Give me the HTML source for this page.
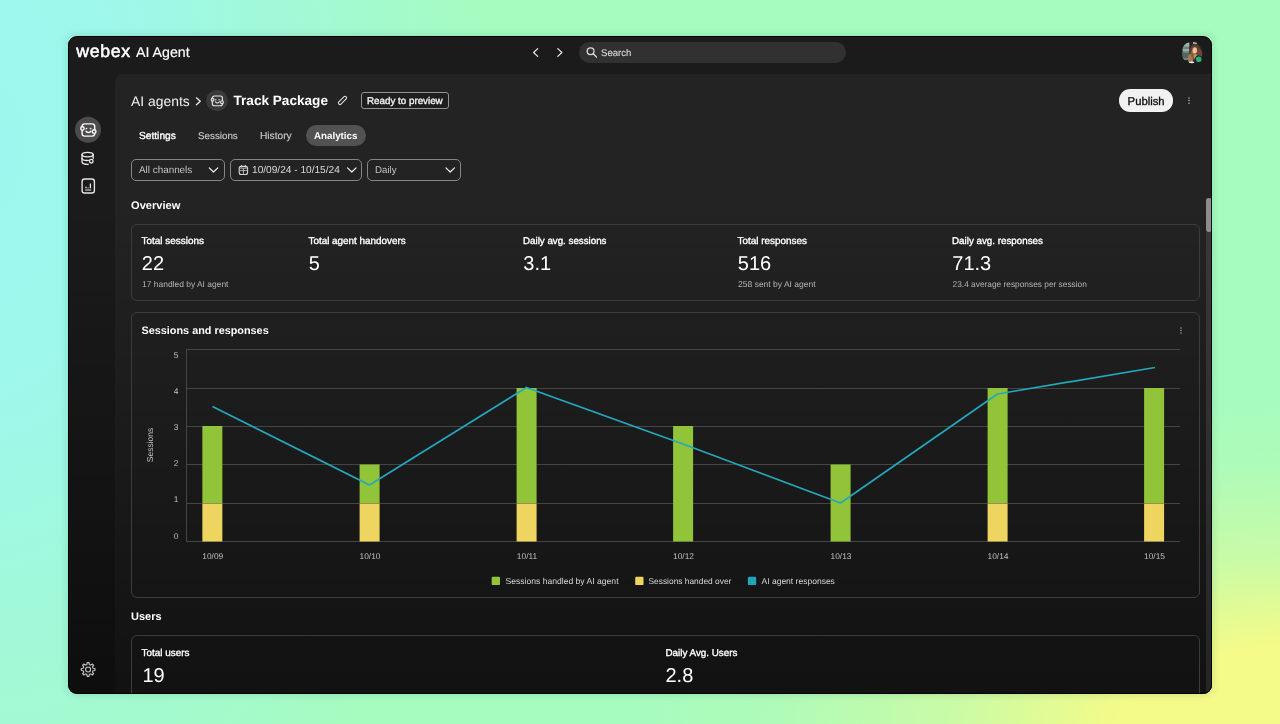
<!DOCTYPE html>
<html lang="en">
<head>
<meta charset="utf-8">
<title>Webex AI Agent - Analytics</title>
<style>
*{box-sizing:border-box;margin:0;padding:0}
html,body{width:1280px;height:724px;overflow:hidden}
body{text-rendering:geometricPrecision;font-family:"Liberation Sans",Arial,sans-serif;position:relative;color:#fff;
 background:
  radial-gradient(ellipse 660px 340px at 1290px 735px, #f4fb88 0%, #f4fb88 26%, rgba(244,251,136,.45) 52%, rgba(244,251,136,.12) 78%, rgba(244,251,136,0) 100%),
  radial-gradient(ellipse 520px 820px at -20px 150px, #9df7ee 0%, rgba(157,247,238,.92) 30%, rgba(157,247,238,0) 100%),
  #a6fbbf;}
.win{position:absolute;left:68px;top:36px;width:1144px;height:658px;border-radius:9px;background:#1b1b1b;overflow:hidden;
 box-shadow:0 0 9px rgba(30,90,70,.2);will-change:transform;}
.win::after{content:"";position:absolute;left:0;top:0;right:0;bottom:0;border-radius:9px;box-shadow:inset 0 0 0 1px rgba(0,0,0,.85);pointer-events:none;z-index:99}
.panel{position:absolute;left:47px;top:38px;right:0;bottom:0;background:#232323;border-top-left-radius:8px}
.shade{position:absolute;left:0;top:0;right:0;bottom:0;pointer-events:none;
 background:linear-gradient(to bottom, rgba(0,0,0,0) 0%, rgba(0,0,0,0) 25%, rgba(0,0,0,.5) 100%);}
.t{position:absolute;white-space:nowrap;line-height:1;}
.b{font-weight:700}
.m{-webkit-text-stroke:.35px currentColor}
.m2{-webkit-text-stroke:.15px currentColor}
.card{position:absolute;border:1px solid #3c3c3c;border-radius:6px}
.dd{position:absolute;height:22px;border:1px solid #858585;border-radius:5px;top:123.1px}
.abs{position:absolute}
svg{position:absolute;overflow:visible}
</style>
</head>
<body>
<div class="win">
  <!-- top bar -->
  <div class="t" style="left:8.2px;top:7px;font-size:17.7px;letter-spacing:.7px;-webkit-text-stroke:.55px #fff">webex</div>
  <div class="t m2" style="left:68px;top:9.7px;font-size:14.2px">AI Agent</div>
  <div class="abs" style="left:511px;top:6px;width:267px;height:21px;border-radius:11px;background:#313131"></div>
  <div class="t m2" style="left:533px;top:12.9px;font-size:9.6px;color:#d4d4d4">Search</div>

<svg style="left:0;top:0" width="1144" height="658" viewBox="68 36 1144 658">
    <defs><clipPath id="avc"><circle cx="1192" cy="52.5" r="10.7"/></clipPath><filter id="avb" x="-20%" y="-20%" width="140%" height="140%"><feGaussianBlur stdDeviation="0.7"/></filter></defs>
    <g clip-path="url(#avc)"><g filter="url(#avb)">
      <rect x="1178" y="38" width="30" height="30" fill="#262827"/>
      <rect x="1182.5" y="45" width="7" height="15" fill="#6c827c"/>
      <rect x="1184" y="42.5" width="5.5" height="4" fill="#9db0a9"/>
      <rect x="1183" y="49" width="6" height="2.2" fill="#8fb3ab"/>
      <rect x="1183" y="53" width="6" height="5" fill="#56665f"/>
      <rect x="1189.6" y="40" width="1.6" height="22" fill="#2a2320"/>
      <rect x="1193" y="41.5" width="4" height="2.6" fill="#9aa8a8"/>
      <ellipse cx="1195.2" cy="52" rx="5.6" ry="7.8" fill="#5d3f2a"/>
      <ellipse cx="1199.6" cy="55" rx="2.6" ry="6" fill="#6b4a33"/>
      <ellipse cx="1190.6" cy="58.6" rx="2.6" ry="4.6" fill="#a67a56"/>
      <ellipse cx="1192.6" cy="54" rx="1.6" ry="4" fill="#8a5f40"/>
      <ellipse cx="1194.8" cy="50.4" rx="2.3" ry="3.1" fill="#f2bc9c"/>
      <ellipse cx="1195.4" cy="56.4" rx="1.7" ry="2.6" fill="#c48e70"/>
      <ellipse cx="1191.6" cy="62.8" rx="2.8" ry="1.3" fill="#f4f4f4"/>
    </g></g>
    <circle cx="1198.7" cy="59.2" r="3.7" fill="#17281f"/>
    <circle cx="1198.7" cy="59.2" r="2.8" fill="#27b07e"/>
  </svg>
  <div class="panel"></div>
  <div class="shade"></div>
  <div class="abs" style="left:1138px;top:162px;width:6px;bottom:0;background:linear-gradient(#3a3a3a,#252525)"></div>

  <!-- header row -->
  <div class="t" style="left:63px;top:58.6px;font-size:13.9px;color:#f0f0f0">AI agents</div>
  <div class="abs" style="left:138px;top:53.5px;width:21.5px;height:21.5px;border-radius:50%;background:#3a3a3a"></div>
  <div class="t b" style="left:165.5px;top:58.4px;font-size:13.6px">Track Package</div>
  <div class="abs" style="left:293px;top:56.3px;width:88px;height:16.6px;border:1px solid #949494;border-radius:3px;background:#1e1e1e"></div>
  <div class="t m" style="left:299px;top:60.9px;font-size:9.8px;color:#f2f2f2">Ready to preview</div>
  <div class="abs" style="left:1051.3px;top:53.3px;width:54px;height:22.5px;border-radius:11.3px;background:#f2f2f2"></div>
  <div class="t m" style="left:1059.6px;top:60.6px;font-size:11.3px;color:#111">Publish</div>

  <!-- tabs -->
  <div class="t m" style="left:71px;top:95.7px;font-size:10.2px;color:#fff">Settings</div>
  <div class="t m2" style="left:130px;top:95.7px;font-size:9.8px;color:#c8c8c8">Sessions</div>
  <div class="t m2" style="left:192px;top:95.7px;font-size:10.2px;color:#c8c8c8">History</div>
  <div class="abs" style="left:237.5px;top:89px;width:60px;height:21px;border-radius:11px;background:#525252"></div>
  <div class="t b" style="left:246px;top:95.7px;font-size:9.75px">Analytics</div>

  <!-- dropdowns -->
  <div class="dd" style="left:63px;width:93.6px"></div>
  <div class="t" style="left:71px;top:130.1px;font-size:9.9px;color:#c4c4c4">All channels</div>
  <div class="dd" style="left:162px;width:132px"></div>
  <div class="t" style="left:184px;top:130.1px;font-size:10.15px;color:#d8d8d8">10/09/24 - 10/15/24</div>
  <div class="dd" style="left:299px;width:94px"></div>
  <div class="t" style="left:307px;top:130.1px;font-size:9.7px;color:#c4c4c4">Daily</div>

  <div class="t b" style="left:63px;top:164.6px;font-size:11.1px">Overview</div>

  <!-- overview card -->
  <div class="card" style="left:63px;top:187.5px;width:1069px;height:77.5px"></div>
  <div class="t m" style="left:73.5px;top:200.9px;font-size:9.95px">Total sessions</div>
  <div class="t" style="left:73.8px;top:218.4px;font-size:20px">22</div>
  <div class="t" style="left:74.1px;top:243.7px;font-size:8.45px;color:#b4b4b4">17 handled by AI agent</div>
  <div class="t m" style="left:240.5px;top:200.9px;font-size:9.9px">Total agent handovers</div>
  <div class="t" style="left:240.8px;top:218.4px;font-size:20px">5</div>
  <div class="t m" style="left:455px;top:200.9px;font-size:9.76px">Daily avg. sessions</div>
  <div class="t" style="left:455.3px;top:218.4px;font-size:20px">3.1</div>
  <div class="t m" style="left:669.5px;top:200.9px;font-size:9.92px">Total responses</div>
  <div class="t" style="left:669.8px;top:218.4px;font-size:20px">516</div>
  <div class="t" style="left:670.1px;top:243.7px;font-size:8.5px;color:#b4b4b4">258 sent by AI agent</div>
  <div class="t m" style="left:884px;top:200.9px;font-size:9.8px">Daily avg. responses</div>
  <div class="t" style="left:884.3px;top:218.4px;font-size:20px">71.3</div>
  <div class="t" style="left:884.6px;top:243.7px;font-size:8.34px;color:#b4b4b4">23.4 average responses per session</div>

  <!-- chart card -->
  <div class="card" style="left:63px;top:276px;width:1069px;height:285.5px"></div>
  <div class="t b" style="left:73.5px;top:290px;font-size:10.85px">Sessions and responses</div>

  <svg style="left:0;top:0" width="1144" height="658" viewBox="68 36 1144 658" font-family="Liberation Sans, Arial, sans-serif">
  <line x1="186.5" x2="1180" y1="349" y2="349" stroke="#454545" stroke-width="1" shape-rendering="crispEdges"/>
  <line x1="186.5" x2="1180" y1="388" y2="388" stroke="#454545" stroke-width="1" shape-rendering="crispEdges"/>
  <line x1="186.5" x2="1180" y1="426" y2="426" stroke="#454545" stroke-width="1" shape-rendering="crispEdges"/>
  <line x1="186.5" x2="1180" y1="464.5" y2="464.5" stroke="#454545" stroke-width="1" shape-rendering="crispEdges"/>
  <line x1="186.5" x2="1180" y1="503" y2="503" stroke="#454545" stroke-width="1" shape-rendering="crispEdges"/>
  <line x1="186.5" x2="1180" y1="541.5" y2="541.5" stroke="#454545" stroke-width="1" shape-rendering="crispEdges"/>
  <line x1="186.5" x2="186.5" y1="349" y2="541.5" stroke="#454545" stroke-width="1" shape-rendering="crispEdges"/>
  <rect x="202.35" y="426" width="20" height="77" fill="#92c439"/>
  <rect x="202.35" y="503.5" width="20" height="38" fill="#edd55f"/>
  <rect x="359.6" y="464.5" width="20" height="38.5" fill="#92c439"/>
  <rect x="359.6" y="503.5" width="20" height="38" fill="#edd55f"/>
  <rect x="516.6" y="388" width="20" height="115" fill="#92c439"/>
  <rect x="516.6" y="503.5" width="20" height="38" fill="#edd55f"/>
  <rect x="673.1" y="426" width="20" height="115.5" fill="#92c439"/>
  <rect x="830.6" y="464.5" width="20" height="77.0" fill="#92c439"/>
  <rect x="987.6" y="388" width="20" height="115" fill="#92c439"/>
  <rect x="987.6" y="503.5" width="20" height="38" fill="#edd55f"/>
  <rect x="1144.1" y="388" width="20" height="115" fill="#92c439"/>
  <rect x="1144.1" y="503.5" width="20" height="38" fill="#edd55f"/>
  <polyline points="212.5,406.5 369.5,485 526.5,387.5 683,444 840.5,503 997.5,394 1155,367.5" fill="none" stroke="#23a8bf" stroke-width="1.7" stroke-linejoin="round"/>
  <text x="176" y="358.0" font-size="8.4" fill="#c0c0c0" text-anchor="middle">5</text>
  <text x="176" y="394.1" font-size="8.4" fill="#c0c0c0" text-anchor="middle">4</text>
  <text x="176" y="430.2" font-size="8.4" fill="#c0c0c0" text-anchor="middle">3</text>
  <text x="176" y="466.3" font-size="8.4" fill="#c0c0c0" text-anchor="middle">2</text>
  <text x="176" y="502.4" font-size="8.4" fill="#c0c0c0" text-anchor="middle">1</text>
  <text x="176" y="538.5" font-size="8.4" fill="#c0c0c0" text-anchor="middle">0</text>
  <text x="212.75" y="559" font-size="8.4" fill="#c0c0c0" text-anchor="middle">10/09</text>
  <text x="370.0" y="559" font-size="8.4" fill="#c0c0c0" text-anchor="middle">10/10</text>
  <text x="527.0" y="559" font-size="8.4" fill="#c0c0c0" text-anchor="middle">10/11</text>
  <text x="683.5" y="559" font-size="8.4" fill="#c0c0c0" text-anchor="middle">10/12</text>
  <text x="841.0" y="559" font-size="8.4" fill="#c0c0c0" text-anchor="middle">10/13</text>
  <text x="998.0" y="559" font-size="8.4" fill="#c0c0c0" text-anchor="middle">10/14</text>
  <text x="1154.5" y="559" font-size="8.4" fill="#c0c0c0" text-anchor="middle">10/15</text>
  <text transform="translate(153,445) rotate(-90)" font-size="8.5" fill="#c0c0c0" text-anchor="middle">Sessions</text>
  <rect x="491.7" y="576.8" width="8.3" height="8.3" rx="1.2" fill="#92c439"/><text x="505.5" y="583.5" font-size="8.58" fill="#d8d8d8">Sessions handled by AI agent</text>
  <rect x="635.2" y="576.8" width="8.3" height="8.3" rx="1.2" fill="#edd55f"/><text x="648.5" y="583.5" font-size="8.39" fill="#d8d8d8">Sessions handed over</text>
  <rect x="747.9" y="576.8" width="8.3" height="8.3" rx="1.2" fill="#1fa4b9"/><text x="761.5" y="583.5" font-size="8.53" fill="#d8d8d8">AI agent responses</text>
  </svg>

  <svg style="left:0;top:0" width="1144" height="658" viewBox="68 36 1144 658" fill="none" stroke-linecap="round" stroke-linejoin="round">
  <path d="M537.7 48.6 L533.6 52.5 L537.7 56.4" stroke="#e6e6e6" stroke-width="1.25"/>
  <path d="M557.8 48.6 L561.9 52.5 L557.8 56.4" stroke="#e6e6e6" stroke-width="1.25"/>
  <circle cx="590.6" cy="51.2" r="3.4" stroke="#dcdcdc" stroke-width="1.3"/><path d="M593.2 53.8 L596.5 57" stroke="#dcdcdc" stroke-width="1.3"/>
  <circle cx="88" cy="129.8" r="13" fill="#4b4b4b"/>
  <rect x="82.10" y="123.90" width="12.60" height="12.20" rx="2.60" stroke="#fafafa" stroke-width="1.4"/><circle cx="82.40" cy="128.50" r="1.70" fill="#4b4b4b" stroke="#fafafa" stroke-width="1.4"/><circle cx="94.10" cy="131.60" r="1.80" fill="#4b4b4b" stroke="#fafafa" stroke-width="1.4"/><circle cx="86.40" cy="128.50" r="0.85" fill="#fafafa"/><circle cx="90.60" cy="128.50" r="0.85" fill="#fafafa"/><path d="M86.00 131.20 Q88.40 134.00 90.80 131.20" stroke="#fafafa" stroke-width="1.4"/>
  <g stroke="#e8e8e8" stroke-width="1.35"><ellipse cx="87.6" cy="154.6" rx="5.6" ry="2.3"/><path d="M82 154.6 V162 C82 163.6 85 164.4 88.2 164.3"/><path d="M93.2 154.6 V158.2"/><path d="M82 158.4 C82.4 159.8 85.6 160.6 88.4 160.4"/><circle cx="91.3" cy="161.2" r="1.8"/></g>
  <g stroke="#e8e8e8" stroke-width="1.35"><rect x="82.1" y="179" width="12.3" height="14" rx="2.6"/><path d="M86 186.8 V188.2 M88.2 187.4 V188.2 M90.4 183.4 V188.2" stroke-width="1.3" stroke-linecap="butt"/><path d="M85.6 190 H90.9" stroke-width="1"/></g>
  <path d="M86.91 664.54 L87.18 662.66 L89.02 662.66 L89.29 664.54 L90.76 665.15 L92.29 664.01 L93.59 665.31 L92.45 666.84 L93.06 668.31 L94.94 668.58 L94.94 670.42 L93.06 670.69 L92.45 672.16 L93.59 673.69 L92.29 674.99 L90.76 673.85 L89.29 674.46 L89.02 676.34 L87.18 676.34 L86.91 674.46 L85.44 673.85 L83.91 674.99 L82.61 673.69 L83.75 672.16 L83.14 670.69 L81.26 670.42 L81.26 668.58 L83.14 668.31 L83.75 666.84 L82.61 665.31 L83.91 664.01 L85.44 665.15 Z" stroke="#c8c8c8" stroke-width="1.1"/><circle cx="88.1" cy="669.5" r="2.5" stroke="#c8c8c8" stroke-width="1.1"/>
  <path d="M196.4 97.8 L200.3 101.3 L196.4 104.8" stroke="#f0f0f0" stroke-width="1.25"/>
  <rect x="212.36" y="96.02" width="10.08" height="9.76" rx="2.08" stroke="#e6e6e6" stroke-width="1.15"/><circle cx="212.60" cy="99.70" r="1.36" fill="#3a3a3a" stroke="#e6e6e6" stroke-width="1.15"/><circle cx="221.96" cy="102.18" r="1.44" fill="#3a3a3a" stroke="#e6e6e6" stroke-width="1.15"/><circle cx="215.80" cy="99.70" r="0.68" fill="#e6e6e6"/><circle cx="219.16" cy="99.70" r="0.68" fill="#e6e6e6"/><path d="M215.48 101.86 Q217.40 104.10 219.32 101.86" stroke="#e6e6e6" stroke-width="1.15"/>
  <g transform="translate(342.5 100.4) rotate(-45)"><rect x="-5.1" y="-1.5" width="10.2" height="3" rx="1.4" stroke="#e4e4e4" stroke-width="1.05"/></g>
  <path d="M209.2 167.9 L213.5 172 L217.8 167.9" stroke="#f0f0f0" stroke-width="1.2"/>
  <path d="M347.5 167.9 L351.8 172 L356.1 167.9" stroke="#f0f0f0" stroke-width="1.2"/>
  <path d="M445.9 167.9 L450.2 172 L454.5 167.9" stroke="#f0f0f0" stroke-width="1.2"/>
  <g stroke="#d6d6d6" stroke-width="1.1"><rect x="239.2" y="166.4" width="8.4" height="8.1" rx="2"/><path d="M241.4 165.6 V167 M245.4 165.6 V167" /><path d="M239.4 170.6 H247.4 M243.4 168.4 V174.2 M239.6 168.2 H247.2" stroke-width="0.9" stroke="#bdbdbd"/></g>
  <circle cx="1189" cy="98.0" r="0.75" fill="#bdbdbd"/>
  <circle cx="1189" cy="100.6" r="0.75" fill="#bdbdbd"/>
  <circle cx="1189" cy="103.19999999999999" r="0.75" fill="#bdbdbd"/>
  <circle cx="1181" cy="327.9" r="0.75" fill="#a8a8a8"/>
  <circle cx="1181" cy="330.5" r="0.75" fill="#a8a8a8"/>
  <circle cx="1181" cy="333.1" r="0.75" fill="#a8a8a8"/>
  </svg>

  <!-- users -->
  <div class="t b" style="left:63px;top:575.7px;font-size:11px">Users</div>
  <div class="card" style="left:63px;top:599px;width:1069px;height:80px"></div>
  <div class="t m" style="left:73.5px;top:612.7px;font-size:9.93px">Total users</div>
  <div class="t" style="left:74.5px;top:630.1px;font-size:20px">19</div>
  <div class="t m" style="left:597.5px;top:612.7px;font-size:9.84px">Daily Avg. Users</div>
  <div class="t" style="left:597.5px;top:630.1px;font-size:20px">2.8</div>

  <!-- scrollbar -->
  <div class="abs" style="left:1138.2px;top:162px;width:5.6px;height:33.5px;border-radius:3px;background:#8c8c8c"></div>

</div>
</body>
</html>
